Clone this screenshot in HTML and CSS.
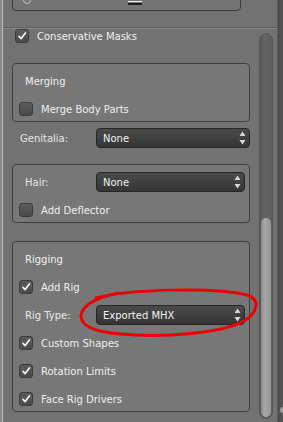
FILE: index.html
```html
<!DOCTYPE html>
<html>
<head>
<meta charset="utf-8">
<link rel="stylesheet" href="styles.css">
</head>
<body>
<div class="frame">
  <div class="edge-left"></div>
  <div class="panel">
    <div class="top">
      <div class="top-box">
        <span class="circle-icon"></span>
        <span class="dash"></span>
      </div>
    </div>
    <div class="body">
      <div class="content">
        <div class="check-row lone">
          <span class="check on"><svg viewBox="0 0 14 14"><path d="M3.5 7.5 L6 10 L11 3.5"/></svg></span>
          <span class="text">Conservative Masks</span>
        </div>

        <div class="box b1">
          <div class="row label-row"><span class="text">Merging</span></div>
          <div class="row check-row">
            <span class="check"></span>
            <span class="text">Merge Body Parts</span>
          </div>
        </div>

        <div class="field outside">
          <span class="flabel">Genitalia:</span>
          <span class="select"><span class="sval">None</span><svg class="arrows" viewBox="0 0 7 14"><path d="M3.5 0.5 L6.5 5 L0.5 5 Z M0.5 9 L6.5 9 L3.5 13.5 Z"/></svg></span>
        </div>

        <div class="box b2">
          <div class="row field">
            <span class="flabel">Hair:</span>
            <span class="select"><span class="sval">None</span><svg class="arrows" viewBox="0 0 7 14"><path d="M3.5 0.5 L6.5 5 L0.5 5 Z M0.5 9 L6.5 9 L3.5 13.5 Z"/></svg></span>
          </div>
          <div class="row check-row">
            <span class="check"></span>
            <span class="text">Add Deflector</span>
          </div>
        </div>

        <div class="box b3">
          <div class="row label-row"><span class="text">Rigging</span></div>
          <div class="row check-row">
            <span class="check on"><svg viewBox="0 0 14 14"><path d="M3.5 7.5 L6 10 L11 3.5"/></svg></span>
            <span class="text">Add Rig</span>
          </div>
          <div class="row field">
            <span class="flabel">Rig Type:</span>
            <span class="select"><span class="sval">Exported MHX</span><svg class="arrows" viewBox="0 0 7 14"><path d="M3.5 0.5 L6.5 5 L0.5 5 Z M0.5 9 L6.5 9 L3.5 13.5 Z"/></svg></span>
          </div>
          <div class="row check-row">
            <span class="check on"><svg viewBox="0 0 14 14"><path d="M3.5 7.5 L6 10 L11 3.5"/></svg></span>
            <span class="text">Custom Shapes</span>
          </div>
          <div class="row check-row">
            <span class="check on"><svg viewBox="0 0 14 14"><path d="M3.5 7.5 L6 10 L11 3.5"/></svg></span>
            <span class="text">Rotation Limits</span>
          </div>
          <div class="row check-row">
            <span class="check on"><svg viewBox="0 0 14 14"><path d="M3.5 7.5 L6 10 L11 3.5"/></svg></span>
            <span class="text">Face Rig Drivers</span>
          </div>
        </div>
      </div>
      <div class="scroll">
        <div class="track"><div class="thumb"></div></div>
      </div>
    </div>
  </div>
  <div class="edge-right"><span class="knob"></span></div>
</div>
<svg class="annot" width="283" height="422" viewBox="0 0 283 422">
  <path d="M96 298 C 130 289, 215 287, 247 295 C 262 300, 256 314, 244 321 C 222 333, 165 338, 120 334 C 96 332, 81 326, 81 316 C 82 305, 95 298, 118 293"/>
</svg>
</body>
</html>
```

FILE: styles.css
```css
html, body {
  margin: 0;
  padding: 0;
}
body {
  width: 283px;
  height: 422px;
  overflow: hidden;
  background: #727272;
  font-family: "DejaVu Sans", sans-serif;
  font-size: 10px;
  color: #efefef;
  position: relative;
}
.frame {
  display: flex;
  height: 422px;
}
.edge-left {
  width: 3px;
  flex: none;
  background: linear-gradient(to right, #8a8a8a 0, #8a8a8a 2px, #bcbcbc 2px);
}
.panel {
  width: 274px;
  flex: none;
  display: flex;
  flex-direction: column;
}
.top {
  height: 27px;
  border-bottom: 1px solid #5e5e5e;
  overflow: hidden;
}
.top-box {
  margin: -10px 0 0 9px;
  width: 229px;
  height: 21px;
  box-sizing: border-box;
  border: 1px solid #3a3a3a;
  border-radius: 4px;
  background: #747474;
  display: flex;
  align-items: flex-start;
  padding-top: 5px;
}
.circle-icon {
  margin-left: 10px;
  width: 6px;
  height: 6px;
  border: 1px solid #c8c8c8;
  border-radius: 50%;
}
.dash {
  margin-left: 97px;
  margin-top: 5px;
  width: 14px;
  height: 1px;
  border-top: 1px solid #f0f0f0;
  border-bottom: 2px solid #1e1e1e;
}
.body {
  flex: 1;
  display: flex;
  border-top: 1px solid #888888;
}
.content {
  width: 256px;
  flex: none;
}
.check-row {
  display: flex;
  align-items: center;
}
.check-row.lone {
  height: 14px;
  padding-left: 12px;
}
.check {
  width: 14px;
  height: 14px;
  box-sizing: border-box;
  flex: none;
  border: 1px solid #3b3b3b;
  border-radius: 3px;
  background: linear-gradient(#5c5c5c, #4a4a4a);
  display: flex;
}
.check svg {
  width: 12px;
  height: 12px;
}
.check svg path {
  fill: none;
  stroke: #f4f4f4;
  stroke-width: 2;
  stroke-linecap: round;
  stroke-linejoin: round;
}
.check-row .text {
  margin-left: 8px;
}
.box {
  margin-left: 9px;
  width: 238px;
  box-sizing: border-box;
  border: 1px solid #3e3e3e;
  border-radius: 4px;
  background: #777777;
  padding: 5px 0 0;
  display: flex;
  flex-direction: column;
  gap: 4px;
}
.b1 { margin-top: 20px; }
.b2 { margin-top: 15px; }
.b3 { margin-top: 18px; }
.row {
  height: 24px;
  display: flex;
  align-items: center;
}
.label-row {
  padding-left: 12px;
}
.box .check-row {
  padding-left: 6px;
}
.field {
  display: flex;
  align-items: center;
}
.field.outside {
  margin: 5px 0 0 9px;
  width: 238px;
  height: 22px;
}
.field.outside .flabel {
  width: 84px;
  padding-left: 8px;
}
.box .field {
  padding-right: 4px;
}
.box .field .flabel {
  width: 83px;
  padding-left: 12px;
}
.flabel {
  box-sizing: border-box;
  flex: none;
  color: #e8e8e8;
}
.select {
  flex: 1;
  height: 20px;
  box-sizing: border-box;
  border: 1px solid #262626;
  border-radius: 4px;
  background: linear-gradient(#4a4a4a, #353535);
  display: flex;
  align-items: center;
  padding: 0 3px 0 6px;
  color: #f2f2f2;
}
.sval {
  flex: 1;
}
.arrows {
  width: 7px;
  height: 14px;
}
.arrows path {
  fill: #d8d8d8;
}
.scroll {
  width: 18px;
  flex: none;
  display: flex;
  flex-direction: column;
  padding-top: 4px;
  padding-bottom: 3px;
  box-sizing: border-box;
}
.track {
  width: 14px;
  flex: 1;
  box-sizing: border-box;
  border: 1px solid #565656;
  border-radius: 7px;
  background: linear-gradient(to right, #5a5a5a, #646464 40%, #5e5e5e);
  padding: 184px 1px 1px;
  display: flex;
}
.thumb {
  flex: 1;
  border-radius: 6px;
  background: linear-gradient(to right, #8c8c8c, #a8a8a8 40%, #959595);
}
.edge-right {
  width: 6px;
  flex: none;
  background: linear-gradient(to right, #5c5c5c 0, #5c5c5c 1px, #4a4a4a 1px, #4a4a4a 2px, #525252 2px);
  display: flex;
  flex-direction: column;
  justify-content: flex-end;
  align-items: flex-end;
  padding-bottom: 9px;
  box-sizing: border-box;
}
.knob {
  width: 3px;
  height: 6px;
  border-radius: 3px 0 0 3px;
  background: #9c9c9c;
}
.annot {
  position: absolute;
  left: 0;
  top: 0;
  pointer-events: none;
}
.annot path {
  fill: none;
  stroke: #ee0000;
  stroke-width: 3;
  stroke-linecap: round;
  stroke-linejoin: round;
}
```
